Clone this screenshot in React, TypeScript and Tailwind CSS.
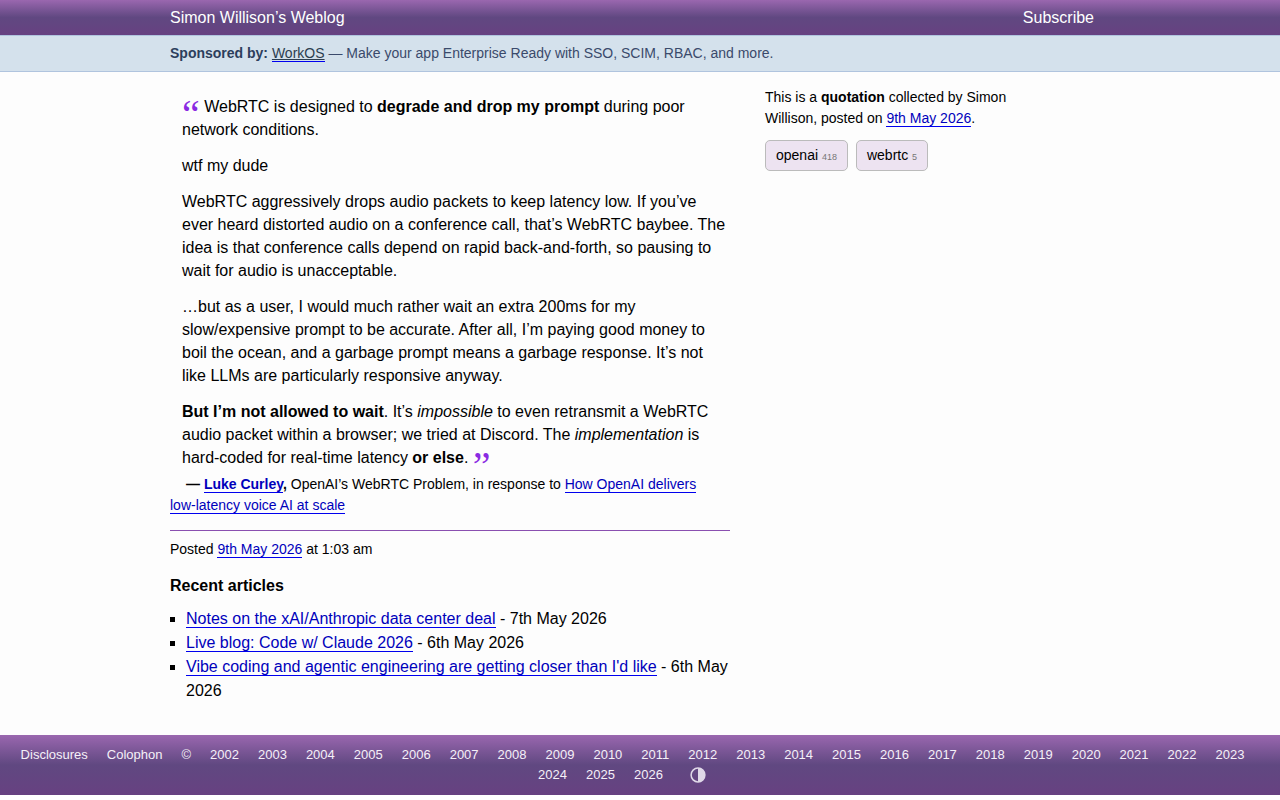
import type { ReactNode } from "react";

interface Article {
  title: string;
  date: string;
}

interface Tag {
  name: string;
  count: number;
}

const articles: Article[] = [
  { title: "Notes on the xAI/Anthropic data center deal", date: "7th May 2026" },
  { title: "Live blog: Code w/ Claude 2026", date: "6th May 2026" },
  {
    title: "Vibe coding and agentic engineering are getting closer than I'd like",
    date: "6th May 2026",
  },
];

const tags: Tag[] = [
  { name: "openai", count: 418 },
  { name: "webrtc", count: 5 },
];

const years = Array.from({ length: 25 }, (_, i) => 2002 + i);

function TextLink({ children }: { children: ReactNode }) {
  return (
    <a href="#" className="border-b border-[#0000ee] text-[#0000bb]">
      {children}
    </a>
  );
}

function QuoteMark({ children }: { children: ReactNode }) {
  return (
    <span className="align-[-16px] font-['Liberation_Serif',serif] text-[40px] leading-[0] text-[#8a2be2]">
      {children}
    </span>
  );
}

function Header() {
  return (
    <header className="bg-linear-to-b from-[#9a67af] via-[#604881] to-[#674181] text-white">
      <div className="mx-auto flex max-w-[940px] items-center justify-between pr-4">
        <a href="#" className="leading-[35px]">
          Simon Willison’s Weblog
        </a>
        <a href="#" className="leading-[35px]">
          Subscribe
        </a>
      </div>
    </header>
  );
}

function Sponsor() {
  return (
    <div className="border-y border-[#b0c4de] bg-[#d4e1ec] text-[#3a4a6b]">
      <div className="mx-auto max-w-[940px] text-sm leading-[35px]">
        <strong className="text-[#2c3e5c]">Sponsored by:</strong>{" "}
        <a href="#" className="border-b border-[#0000ee] text-[#2c3e50] underline">
          WorkOS
        </a>{" "}
        — Make your app Enterprise Ready with SSO, SCIM, RBAC, and more.
      </div>
    </div>
  );
}

function Quotation() {
  return (
    <div>
      <blockquote className="flex flex-col gap-[13px] pl-3 leading-[23px]">
        <p>
          <QuoteMark>“</QuoteMark> WebRTC is designed to{" "}
          <strong>degrade and drop my prompt</strong> during poor network
          conditions.
        </p>
        <p>wtf my dude</p>
        <p>
          WebRTC aggressively drops audio packets to keep latency low. If you’ve
          ever heard distorted audio on a conference call, that’s WebRTC baybee.
          The idea is that conference calls depend on rapid back-and-forth, so
          pausing to wait for audio is unacceptable.
        </p>
        <p>
          …but as a user, I would much rather wait an extra 200ms for my
          slow/expensive prompt to be accurate. After all, I’m paying good money
          to boil the ocean, and a garbage prompt means a garbage response. It’s
          not like LLMs are particularly responsive anyway.
        </p>
        <p>
          <strong>But I’m not allowed to wait</strong>. It’s <em>impossible</em>{" "}
          to even retransmit a WebRTC audio packet within a browser; we tried at
          Discord. The <em>implementation</em> is hard-coded for real-time
          latency <strong>or else</strong>. <QuoteMark>”</QuoteMark>
        </p>
      </blockquote>
      <p className="mt-[5px] pr-5 indent-4 text-sm leading-[21px]">
        <strong>
          — <TextLink>Luke Curley</TextLink>,
        </strong>{" "}
        OpenAI’s WebRTC Problem, in response to{" "}
        <TextLink>How OpenAI delivers low-latency voice AI at scale</TextLink>
      </p>
    </div>
  );
}

function Footer() {
  return (
    <footer className="bg-linear-to-b from-[#9a67af] via-[#604881] to-[#674181] py-[10px] pr-2 pl-3 text-[13px] leading-5 text-[#f5f0f8]">
      <ul className="flex flex-wrap justify-center">
        <li className="mr-[19px]">
          <a href="#">Disclosures</a>
        </li>
        <li className="mr-[19px]">
          <a href="#">Colophon</a>
        </li>
        <li className="mr-[19px]">©</li>
        {years.map((year) => (
          <li key={year} className="mr-[19px]">
            <a href="#">{year}</a>
          </li>
        ))}
        <li className="mr-8 flex items-center">
          <button type="button" aria-label="Toggle theme" className="px-2">
            <svg viewBox="0 0 16 16" className="size-4 text-[#e0d9e8]">
              <circle
                cx="8"
                cy="8"
                r="6.9"
                fill="none"
                stroke="currentColor"
                strokeWidth="1.5"
              />
              <path d="M8 1a7 7 0 0 1 0 14z" fill="currentColor" />
            </svg>
          </button>
        </li>
      </ul>
    </footer>
  );
}

export default function App() {
  return (
    <div className="bg-[#fdfdfd] font-['Liberation_Sans',Arial,sans-serif] text-base text-black">
      <Header />
      <Sponsor />

      <div className="mx-auto flex max-w-[940px] gap-[35px] pb-8">
        <main className="w-[560px] pt-[23px]">
          <Quotation />

          <p className="mt-[14px] border-t border-[#8a50b0] pt-2 text-sm leading-[21px]">
            Posted <TextLink>9th May 2026</TextLink> at 1:03 am
          </p>

          <h2 className="mt-[14px] font-bold leading-6">Recent articles</h2>
          <ul className="mt-[9px] list-[square] pl-4 leading-6">
            {articles.map((article) => (
              <li key={article.title}>
                <TextLink>{article.title}</TextLink> - {article.date}
              </li>
            ))}
          </ul>
        </main>

        <aside className="w-64 pt-[15px] text-sm leading-[21px]">
          <p>
            This is a <strong>quotation</strong> collected by Simon Willison,
            posted on <TextLink>9th May 2026</TextLink>.
          </p>
          <div className="mt-[11px] flex gap-2">
            {tags.map((tag) => (
              <a
                key={tag.name}
                href="#"
                className="rounded-[5px] border border-[#bbb] bg-[#ede3f1] px-[10px] py-1"
              >
                {tag.name}{" "}
                <span className="text-[9px] leading-none text-[#777]">
                  {tag.count}
                </span>
              </a>
            ))}
          </div>
        </aside>
      </div>

      <Footer />
    </div>
  );
}
